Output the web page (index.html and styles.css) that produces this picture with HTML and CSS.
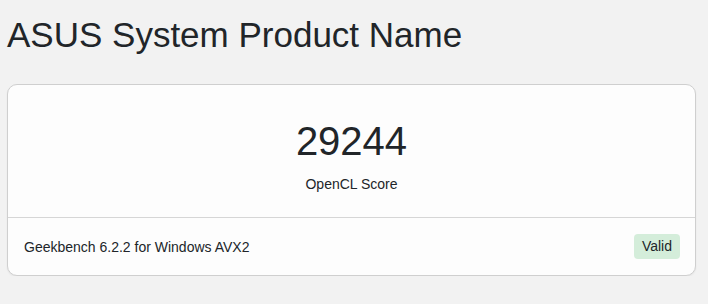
FILE: index.html
```html
<!DOCTYPE html>
<html lang="en">

<head>
    <meta charset="UTF-8">
    <meta name="viewport" content="width=device-width, initial-scale=1.0">
    <title>ASUS System Product Name</title>
    <link rel="stylesheet" href="styles.css">
</head>

<body>

    <h1 class="title">ASUS System Product Name</h1>

    <div class="card">
        <div class="score-box">
            <div class="score">29244</div>
            <div class="label">OpenCL Score</div>
        </div>

        <div class="card-footer">
            <span class="version">Geekbench 6.2.2 for Windows AVX2</span>
            <span class="badge">Valid</span>
        </div>
    </div>

</body>

</html>
```

FILE: styles.css
```css
* {
    margin: 0;
    padding: 0;
    box-sizing: border-box;
}

body {
    background-color: #f2f2f2;
    color: #212529;
    font-family: "Liberation Sans", Arial, sans-serif;
    padding: 14px 12px 0 7px;
}

.title {
    font-size: 35px;
    font-weight: normal;
    line-height: 42px;
    margin-bottom: 28px;
}

.card {
    background-color: #fdfdfd;
    border: 1px solid #cfcfcf;
    border-radius: 10px;
    box-shadow: 0 1px 2px rgba(0, 0, 0, 0.06);
}

.score-box {
    text-align: center;
    padding: 32px 0 24px;
    border-bottom: 1px solid #d6d6d6;
}

.score {
    font-size: 40px;
    line-height: 48px;
}

.label {
    font-size: 14px;
    line-height: 18px;
    margin-top: 10px;
}

.card-footer {
    height: 57px;
    display: flex;
    justify-content: space-between;
    align-items: center;
    padding: 0 15px 0 16px;
    font-size: 14px;
}

.badge {
    background-color: #d4edda;
    border-radius: 4px;
    padding: 0 8px;
    height: 25px;
    line-height: 25px;
    font-size: 14px;
}
```
